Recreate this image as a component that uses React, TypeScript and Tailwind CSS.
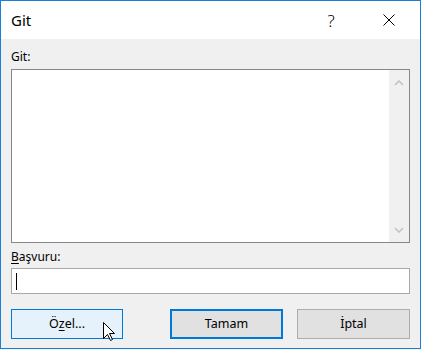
import React from 'react';

const font = { fontFamily: '"Noto Sans", "Open Sans", sans-serif' };

const Chevron: React.FC<{ down?: boolean }> = ({ down }) => (
  <svg width="10" height="6" viewBox="0 0 10 6" className="block">
    <path
      d={down ? 'M1 1 L5 5 L9 1' : 'M1 5 L5 1 L9 5'}
      fill="none"
      stroke="#c3c3c3"
      strokeWidth="1.6"
    />
  </svg>
);

export default function App() {
  return (
    <div className="relative w-[421px] h-[350px] bg-[#f0f0f0] text-black" style={font}>
      <div className="h-[349px] border border-[#1a80d6] flex flex-col bg-[#f0f0f0]">
        {/* Title bar */}
        <div className="h-[38px] bg-white flex items-center shrink-0">
          <span className="flex-1 pl-[10px] text-[15px] leading-none">Git</span>
          <div className="w-[58px] flex justify-center text-[17px] leading-none font-light">?</div>
          <div className="w-[58px] flex justify-center">
            <svg width="12" height="12" viewBox="0 0 12 12">
              <path d="M0.5 0.5 L11.5 11.5 M11.5 0.5 L0.5 11.5" stroke="#000" strokeWidth="1" />
            </svg>
          </div>
          <div className="w-[2px]" />
        </div>

        {/* Body */}
        <div className="flex-1 flex flex-col px-[10px] pt-[10px] text-[12px]">
          <label className="h-[16px] leading-[16px] mb-[4px]">Git:</label>
          <div className="h-[174px] border border-[#828790] bg-white flex">
            <div className="flex-1" />
            <div className="w-[20px] bg-[#f0f0f0] flex flex-col items-center justify-between pt-[10px] pb-[9px]">
              <Chevron />
              <Chevron down />
            </div>
          </div>

          <label className="h-[16px] leading-[16px] mt-[6px] mb-[3px]">
            <span className="underline underline-offset-2">B</span>aşvuru:
          </label>
          <div className="h-[26px] border border-[#a9a9a9] bg-white flex items-center">
            <span className="ml-[4px] w-px h-[17px] bg-black" />
          </div>

          <div className="flex mt-[15px] text-[12.5px]">
            <div className="w-[112px] h-[30px] border border-[#0078d7] bg-[#e5f1fb] flex items-center justify-center">
              Ö<span className="underline underline-offset-2">z</span>el...
            </div>
            <div className="ml-auto w-[113px] h-[30px] border-2 border-[#0078d7] bg-[#e1e1e1] flex items-center justify-center">
              Tamam
            </div>
            <div className="ml-[14px] w-[113px] h-[30px] border border-[#adadad] bg-[#e1e1e1] flex items-center justify-center">
              İptal
            </div>
          </div>
        </div>
      </div>

      {/* Mouse pointer */}
      <svg className="absolute left-[103px] top-[322px]" width="13" height="20" viewBox="0 0 13 20">
        <path
          d="M0.5 0.5 L0.5 16.5 L4.5 12.5 L7.5 18.5 L9.5 17.5 L6.5 11.5 L11.5 11.5 Z"
          fill="#fff"
          stroke="#000"
          strokeWidth="1"
          strokeLinejoin="miter"
        />
      </svg>
    </div>
  );
}
